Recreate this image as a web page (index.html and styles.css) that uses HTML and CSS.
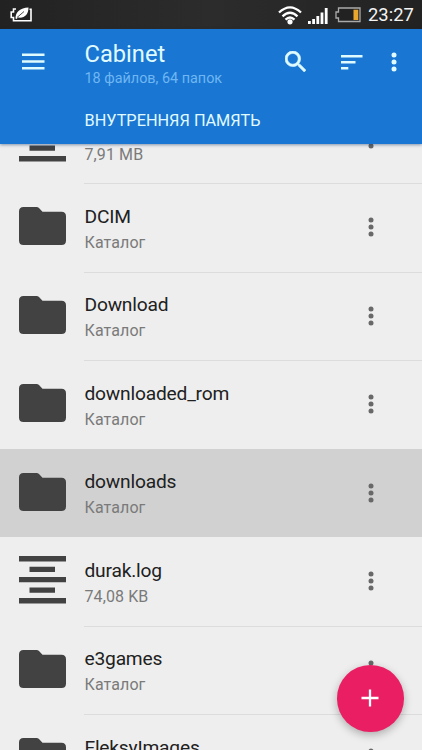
FILE: index.html
```html
<!DOCTYPE html>
<html lang="ru">
<head>
<meta charset="utf-8">
<title>Cabinet</title>
<link rel="stylesheet" href="styles.css">
</head>
<body>
<svg class="defs" aria-hidden="true">
  <symbol id="folder" viewBox="0 0 47 38"><path d="M4.5 0H17.5Q19 0 20 1L23.5 4.8H42.5Q47 4.8 47 9.3V33.5Q47 38 42.5 38H4.5Q0 38 0 33.5V4.5Q0 0 4.5 0Z"/></symbol>
  <symbol id="file" viewBox="0 0 47 48"><path d="M0 0H47V5.5H0ZM10.5 10.7H36V16H10.5ZM0 21H47V26.3H0ZM10.5 31.5H36V36.8H10.5ZM0 42H47V47.5H0Z"/></symbol>
  <symbol id="dots" viewBox="0 0 6 20"><circle cx="3" cy="3" r="2.5"/><circle cx="3" cy="10" r="2.5"/><circle cx="3" cy="17" r="2.5"/></symbol>
</svg>
<div class="screen">
  <div class="status">
    <svg class="leaf" width="23" height="16" viewBox="0 0 23 16"><path d="M6 2H3.5V5H1.2V10.5H3.5V13.7H21V2.2H19.5" fill="none" stroke="#fff" stroke-width="1.6"/><path d="M5.5 11.5C5.5 5 10 1 18.5.5C18.5 7.500 14.500 11.500 8 10.500L6.500 12Z" fill="#fff"/><path d="M7 10.500L14 4.500" stroke="#262626" stroke-width=".8"/></svg>
    <svg class="wifi" width="24" height="19" viewBox="0 0 24 19"><g fill="none" stroke="#fff" stroke-width="2.300"><path d="M1 6.500Q12-3.800 23 6.500"/><path d="M4.500 10.300Q12 3.300 19.500 10.300"/><path d="M7.500 13.600Q12 9.300 16.500 13.600"/></g><circle cx="12" cy="15.800" r="2.600" fill="#fff"/></svg>
    <svg class="signal" width="20" height="16" viewBox="0 0 20 16"><path d="M0 13H2.800V16H0ZM4.200 11H7V16H4.200ZM8.400 8H11.200V16H8.400ZM12.600 4.500H15.400V16H12.600ZM16.800 0H19.600V16H16.800Z" fill="#fff"/></svg>
    <svg class="battery" width="26" height="16" viewBox="0 0 26 16"><path d="M3.500 1H25V14.500H3.500V11H1V5H3.500Z" fill="#222" stroke="#aaa" stroke-width="1.300"/><path d="M18.500 2.700H23.300V13H18.500Z" fill="#eba62c"/></svg>
    <span class="clock">23:27</span>
  </div>
  <header class="bar">
    <svg class="menu" width="23" height="17" viewBox="0 0 23 17"><path d="M0 .5H22.500V3H0ZM0 7.200H22.500V9.700H0ZM0 14H22.500V16.500H0Z"/></svg>
    <div class="titles">
      <h1>Cabinet</h1>
      <p class="count">18 файлов, 64 папок</p>
      <p class="path">ВНУТРЕННЯЯ ПАМЯТЬ</p>
    </div>
    <svg class="search" width="21" height="21" viewBox="3 3 17.500 17.500"><path stroke="#e0fbff" stroke-width=".5" d="M15.500 14h-.79l-.28-.27A6.471 6.471 0 0 0 16 9.500 6.500 6.500 0 1 0 9.500 16c1.610 0 3.090-.59 4.230-1.570l.27.28v.79l5 4.990L20.490 19l-4.990-5zm-6 0C7.010 14 5 11.990 5 9.500S7.010 5 9.500 5 14 7.010 14 9.500 11.990 14 9.500 14z"/></svg>
    <svg class="sort" width="22" height="15" viewBox="0 0 22 15"><path d="M0 0H21.500V2.500H0ZM0 6H14.500V8.500H0ZM0 12H7.300V14.500H0Z"/></svg>
    <svg class="more" width="6" height="20"><use href="#dots"/></svg>
  </header>
  <main class="list">
    <div class="row"><svg class="icon file"><use href="#file"/></svg><div class="text"><span class="sub">7,91 MB</span></div><svg class="dots"><use href="#dots"/></svg></div>
    <div class="row"><svg class="icon"><use href="#folder"/></svg><div class="text"><span class="name">DCIM</span><span class="sub">Каталог</span></div><svg class="dots"><use href="#dots"/></svg></div>
    <div class="row"><svg class="icon"><use href="#folder"/></svg><div class="text"><span class="name">Download</span><span class="sub">Каталог</span></div><svg class="dots"><use href="#dots"/></svg></div>
    <div class="row"><svg class="icon"><use href="#folder"/></svg><div class="text"><span class="name">downloaded_rom</span><span class="sub">Каталог</span></div><svg class="dots"><use href="#dots"/></svg></div>
    <div class="row selected"><svg class="icon"><use href="#folder"/></svg><div class="text"><span class="name">downloads</span><span class="sub">Каталог</span></div><svg class="dots"><use href="#dots"/></svg></div>
    <div class="row"><svg class="icon file"><use href="#file"/></svg><div class="text"><span class="name">durak.log</span><span class="sub">74,08 KB</span></div><svg class="dots"><use href="#dots"/></svg></div>
    <div class="row"><svg class="icon"><use href="#folder"/></svg><div class="text"><span class="name">e3games</span><span class="sub">Каталог</span></div><svg class="dots"><use href="#dots"/></svg></div>
    <div class="row"><svg class="icon"><use href="#folder"/></svg><div class="text"><span class="name">FleksyImages</span></div><svg class="dots"><use href="#dots"/></svg></div>
  </main>
  <button class="fab" aria-label="Добавить"><svg width="18" height="18" viewBox="0 0 18 18"><path d="M9 .5V17.500M.5 9H17.500" stroke="#fff" stroke-width="2.300"/></svg></button>
</div>
</body>
</html>
```
FILE: styles.css
```css
* { box-sizing: border-box; }
body { margin: 0; font-family: Roboto, "Noto Sans", sans-serif; }
h1, p { margin: 0; font-weight: 400; }
svg { display: block; flex: none; }
.defs { position: absolute; width: 0; height: 0; }
.screen {
  position: relative;
  display: flex;
  flex-direction: column;
  width: 422px;
  height: 750px;
  overflow: hidden;
  background: #eee;
}
.status {
  flex: none;
  display: flex;
  align-items: center;
  height: 29px;
  padding: 0 8px 0 10px;
  background: linear-gradient(90deg, #222, #2c2c2c 50%, #222);
  color: #f4f4f4;
}
.wifi { margin: 1px 0 0 auto; }
.signal { margin: 2px 0 0 6px; }
.battery { margin: 1px 0 0 7px; }
.clock {
  width: 46px;
  margin: 1px 0 0 7px;
  font-size: 18.4px;
  line-height: 22px;
  white-space: nowrap;
}
.bar {
  position: relative;
  z-index: 1;
  flex: none;
  display: flex;
  align-items: flex-start;
  height: 115px;
  padding-left: 21.5px;
  background: #1976d2;
  box-shadow: 0 1px 3px rgba(0, 40, 90, .45);
  color: #e0fbff;
  fill: #e0fbff;
}
.menu { margin-top: 24px; }
.titles { width: 200px; margin-left: 40px; white-space: nowrap; }
.titles h1 { margin-top: 11px; font-size: 23.7px; line-height: 28px; }
.count { margin-top: 2px; font-size: 14.4px; line-height: 18px; color: #6fb6f2; }
.path { margin-top: 23px; font-size: 16.3px; line-height: 20px; }
.search { margin: 22px 0 0 0; }
.sort { margin: 26px 0 0 35px; }
.more { margin: 23px 0 0 28.5px; }
.list { flex: 1; min-height: 0; overflow: hidden; }
.row { display: flex; height: 88.5px; padding-left: 19px; }
.row:first-child { margin-top: -49.5px; }
.row:first-child .text { padding-top: 46px; }
.icon { width: 47px; height: 38px; margin-top: 24.3px; fill: #424242; }
.icon.file { height: 48px; margin-top: 19px; }
.text {
  flex: none;
  display: flex;
  flex-direction: column;
  width: 283.5px;
  height: 100%;
  margin-left: 18.5px;
  padding-top: 21.7px;
}
.row + .row { background: linear-gradient(#dcdcdc, #dcdcdc) 84px 0 / 338px 1px no-repeat; }
.row.selected, .row.selected + .row { background-image: none; }
.row.selected { background-color: #d1d1d1; }
.name { font-size: 19.2px; line-height: 24px; letter-spacing: -.2px; color: #212121; }
.sub { margin-top: 4px; font-size: 16px; line-height: 20px; letter-spacing: .1px; color: #7a7a7a; }
.dots { width: 6px; height: 20px; margin-top: 34px; fill: #686868; }
.fab {
  position: absolute;
  left: 337px;
  top: 665px;
  display: flex;
  align-items: center;
  justify-content: center;
  width: 66.5px;
  height: 66.5px;
  padding: 0;
  border: 0;
  border-radius: 50%;
  background: #e91e63;
  box-shadow: 0 3px 8px rgba(0, 0, 0, .28);
}
```
